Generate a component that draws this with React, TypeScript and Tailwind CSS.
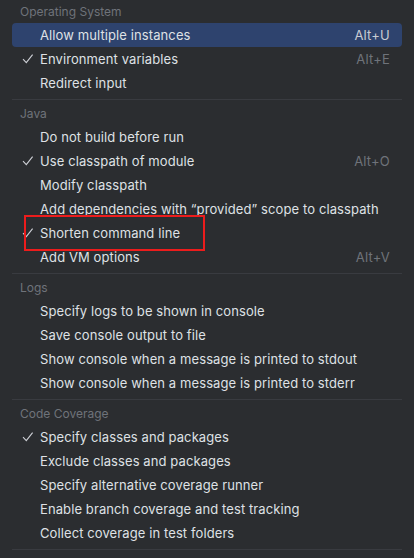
import React from "react";

type Item = { label: string; checked?: boolean; shortcut?: string; selected?: boolean };
type Section = { title: string; items: Item[] };

const sections: Section[] = [
  {
    title: "Operating System",
    items: [
      { label: "Allow multiple instances", shortcut: "Alt+U", selected: true },
      { label: "Environment variables", checked: true, shortcut: "Alt+E" },
      { label: "Redirect input" },
    ],
  },
  {
    title: "Java",
    items: [
      { label: "Do not build before run" },
      { label: "Use classpath of module", checked: true, shortcut: "Alt+O" },
      { label: "Modify classpath" },
      { label: "Add dependencies with \u201cprovided\u201d scope to classpath" },
      { label: "Shorten command line", checked: true },
      { label: "Add VM options", shortcut: "Alt+V" },
    ],
  },
  {
    title: "Logs",
    items: [
      { label: "Specify logs to be shown in console" },
      { label: "Save console output to file" },
      { label: "Show console when a message is printed to stdout" },
      { label: "Show console when a message is printed to stderr" },
    ],
  },
  {
    title: "Code Coverage",
    items: [
      { label: "Specify classes and packages", checked: true },
      { label: "Exclude classes and packages" },
      { label: "Specify alternative coverage runner" },
      { label: "Enable branch coverage and test tracking" },
      { label: "Collect coverage in test folders" },
    ],
  },
];

function Check() {
  return (
    <svg width="12" height="12" viewBox="0 0 12 12" className="block">
      <path d="M1 6.2 L4.3 9.6 L10.6 1.6" fill="none" stroke="#ced0d6" strokeWidth="1.1" />
    </svg>
  );
}

function Row({ item }: { item: Item }) {
  return (
    <div
      className={
        "relative mx-3 flex h-6 items-center rounded-[4px] pl-[10px] pr-[12px] " +
        (item.selected ? "bg-[#2e436e]" : "")
      }
    >
      <div className="flex w-[18px] items-center">{item.checked ? <Check /> : null}</div>
      <span className="flex-1 whitespace-nowrap tracking-[0.1px] text-[#dfe1e5]">{item.label}</span>
      {item.shortcut ? (
        <span className={"tracking-[0.2px] " + (item.selected ? "text-[#c9ccd3]" : "text-[#6f737a]")}>
          {item.shortcut}
        </span>
      ) : null}
      {item.label === "Shorten command line" ? (
        <div className="pointer-events-none absolute left-[12px] top-[-6px] h-[36px] w-[181px] border-2 border-[#ec1c1c]" />
      ) : null}
    </div>
  );
}

export default function App() {
  return (
    <div
      className="h-[558px] w-[414px] overflow-hidden bg-[#2b2d30] text-[13px] leading-none"
      style={{ fontFamily: "Inter, 'Noto Sans', sans-serif" }}
    >
      {sections.map((s, i) => (
        <div key={s.title} className={i === 0 ? "pt-px" : "pt-[3px]"}>
          <div className="flex h-[22px] items-center pl-5 text-[12px] text-[#6f737a]">{s.title}</div>
          {s.items.map((it) => (
            <Row key={it.label} item={it} />
          ))}
          <div className="mx-3 mt-1 h-px bg-[#393b40]" />
        </div>
      ))}
    </div>
  );
}
